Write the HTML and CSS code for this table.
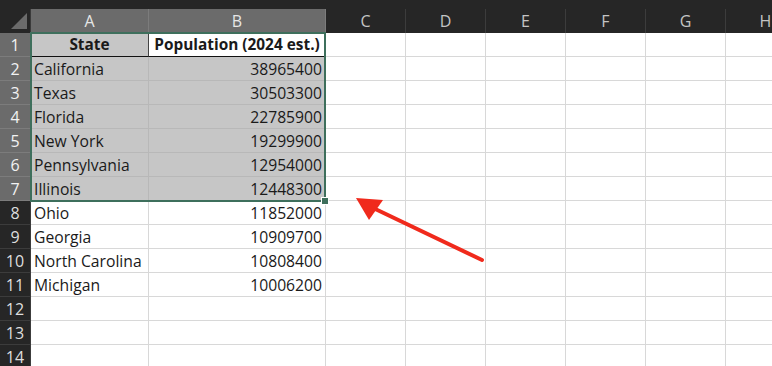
FILE: index.html
```html
<!DOCTYPE html>
<html>
<head>
    <meta charset="utf-8">
    <title>Book1</title>
    <link rel="stylesheet" href="styles.css">
</head>
<body>
    <div class="sheet">
        <div class="grid">
            <div class="corner"><span class="tri"></span></div>
            <div class="colhd on">A</div>
            <div class="colhd on">B</div>
            <div class="colhd">C</div>
            <div class="colhd">D</div>
            <div class="colhd">E</div>
            <div class="colhd">F</div>
            <div class="colhd">G</div>
            <div class="colhd">H</div>

            <div class="rowhd on">1</div>
            <div class="cell sel th first">State</div>
            <div class="cell th active">Population (2024 est.)</div>
            <div class="cell"></div><div class="cell"></div><div class="cell"></div><div class="cell"></div><div class="cell"></div><div class="cell"></div>

            <div class="rowhd on">2</div>
            <div class="cell sel">California</div>
            <div class="cell sel num">38965400</div>
            <div class="cell"></div><div class="cell"></div><div class="cell"></div><div class="cell"></div><div class="cell"></div><div class="cell"></div>

            <div class="rowhd on">3</div>
            <div class="cell sel">Texas</div>
            <div class="cell sel num">30503300</div>
            <div class="cell"></div><div class="cell"></div><div class="cell"></div><div class="cell"></div><div class="cell"></div><div class="cell"></div>

            <div class="rowhd on">4</div>
            <div class="cell sel">Florida</div>
            <div class="cell sel num">22785900</div>
            <div class="cell"></div><div class="cell"></div><div class="cell"></div><div class="cell"></div><div class="cell"></div><div class="cell"></div>

            <div class="rowhd on">5</div>
            <div class="cell sel">New York</div>
            <div class="cell sel num">19299900</div>
            <div class="cell"></div><div class="cell"></div><div class="cell"></div><div class="cell"></div><div class="cell"></div><div class="cell"></div>

            <div class="rowhd on">6</div>
            <div class="cell sel">Pennsylvania</div>
            <div class="cell sel num">12954000</div>
            <div class="cell"></div><div class="cell"></div><div class="cell"></div><div class="cell"></div><div class="cell"></div><div class="cell"></div>

            <div class="rowhd on">7</div>
            <div class="cell sel">Illinois</div>
            <div class="cell sel num">12448300</div>
            <div class="cell"></div><div class="cell"></div><div class="cell"></div><div class="cell"></div><div class="cell"></div><div class="cell"></div>

            <div class="rowhd">8</div>
            <div class="cell">Ohio</div>
            <div class="cell num">11852000</div>
            <div class="cell"></div><div class="cell"></div><div class="cell"></div><div class="cell"></div><div class="cell"></div><div class="cell"></div>

            <div class="rowhd">9</div>
            <div class="cell">Georgia</div>
            <div class="cell num">10909700</div>
            <div class="cell"></div><div class="cell"></div><div class="cell"></div><div class="cell"></div><div class="cell"></div><div class="cell"></div>

            <div class="rowhd">10</div>
            <div class="cell">North Carolina</div>
            <div class="cell num">10808400</div>
            <div class="cell"></div><div class="cell"></div><div class="cell"></div><div class="cell"></div><div class="cell"></div><div class="cell"></div>

            <div class="rowhd">11</div>
            <div class="cell">Michigan</div>
            <div class="cell num">10006200</div>
            <div class="cell"></div><div class="cell"></div><div class="cell"></div><div class="cell"></div><div class="cell"></div><div class="cell"></div>

            <div class="rowhd">12</div>
            <div class="cell"></div><div class="cell"></div>
            <div class="cell"></div><div class="cell"></div><div class="cell"></div><div class="cell"></div><div class="cell"></div><div class="cell"></div>

            <div class="rowhd">13</div>
            <div class="cell"></div><div class="cell"></div>
            <div class="cell"></div><div class="cell"></div><div class="cell"></div><div class="cell"></div><div class="cell"></div><div class="cell"></div>

            <div class="rowhd">14</div>
            <div class="cell"></div><div class="cell"></div>
            <div class="cell"></div><div class="cell"></div><div class="cell"></div><div class="cell"></div><div class="cell"></div><div class="cell"></div>
        </div>

        <!-- selected range A1:B7 -->
        <div class="range"><span class="handle"></span></div>

        <svg class="arrow" width="140" height="80" viewBox="0 0 140 80">
            <line x1="127" y1="66" x2="14" y2="12" stroke="#f02a1c" stroke-width="4" stroke-linecap="round" />
            <polygon points="1,4 28,6 14,26" fill="#f02a1c" />
        </svg>
    </div>
</body>
</html>
```

FILE: styles.css
```css
html, body { margin: 0; padding: 0; }
body { background: #fff; font-family: "Open Sans", "Liberation Sans", sans-serif; overflow: hidden; }

.sheet { position: relative; width: 772px; height: 366px; overflow: hidden; background: #262626; padding-top: 9px; box-sizing: border-box; }

.grid { display: grid; grid-template-columns: 31px 118px 177px repeat(6, 80px); grid-auto-rows: 24px; width: 806px; background: #fff; }

.corner { background: #262626; border-right: 1px solid #3a3a3a; position: relative; }
.corner .tri { position: absolute; right: 3px; bottom: 4px; width: 0; height: 0; border-left: 16px solid transparent; border-bottom: 16px solid #6b6b6b; }

.colhd { background: #262626; color: #c4c4c4; font-size: 16px; display: flex; align-items: center; justify-content: center; border-right: 1px solid #3c3c3c; box-sizing: border-box; }
.colhd.on { background: #6b6b6b; color: #e6e6e6; border-right-color: #7c7c7c; }

.rowhd { background: #262626; color: #dedede; font-size: 16px; display: flex; align-items: center; justify-content: center; border-bottom: 1px solid #3c3c3c; border-right: 1px solid #3c3c3c; box-sizing: border-box; }
.rowhd.on { background: #6b6b6b; color: #f2f2f2; border-bottom-color: #7c7c7c; border-right-color: #6b6b6b; }

.cell { border-right: 1px solid #d8d8d8; border-bottom: 1px solid #d8d8d8; box-sizing: border-box; font-size: 15.7px; color: #1a1a1a; padding: 0 3px; line-height: 24px; white-space: nowrap; overflow: visible; }
.cell.num { text-align: right; }
.cell.sel { background: #c6c6c6; border-color: #b8b8b8; }
.cell.th { font-weight: bold; text-align: center; border-bottom: 1px solid #111; font-size: 15.4px; }
.cell.th.first { border-right: 1px solid #444; }
.cell.active { background: #fff; }

.range { position: absolute; left: 30px; top: 32px; width: 296px; height: 170px; border: 2px solid #3e6f5c; box-sizing: border-box; }
.range .handle { position: absolute; right: -5px; bottom: -5px; width: 6px; height: 6px; background: #3e6f5c; border: 1px solid #fff; }

.arrow { position: absolute; left: 355px; top: 194px; }
```
